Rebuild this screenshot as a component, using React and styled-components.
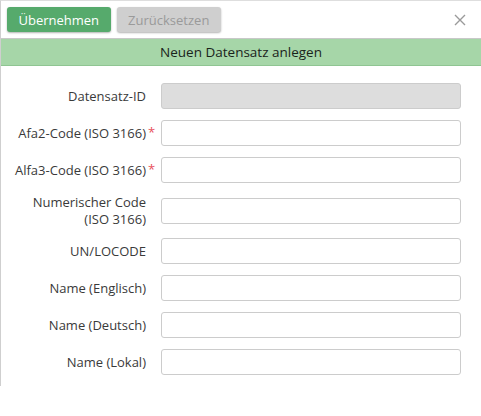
import React from 'react';
import styled, { createGlobalStyle } from 'styled-components';

const GlobalStyle = createGlobalStyle`
	html, body {
		margin: 0;
		padding: 0;
		background: #fff;
		font-family: 'Open Sans', 'Liberation Sans', sans-serif;
	}
`;

const Panel = styled.div`
	box-sizing: border-box;
	width: 481px;
	height: 386px;
	border-top: 1px solid #dedede;
	border-left: 1px solid #cfcfcf;
	background: #fff;
`;

const Toolbar = styled.div`
	display: flex;
	align-items: center;
	gap: 6px;
	height: 37px;
	padding: 0 6px;
	border-bottom: 1px solid #c8c8c8;
`;

const Button = styled.button`
	height: 25px;
	padding: 0 11.5px;
	border: none;
	border-radius: 3px;
	font-family: inherit;
	font-size: 13px;
	color: ${(props) => (props.primary ? '#fff' : '#9a9a9a')};
	background: ${(props) => (props.primary ? '#56aa6c' : '#cfcfcf')};
	box-shadow: 0 1px 2px rgba(0, 0, 0, 0.3);
	cursor: pointer;
`;

const Close = styled.button`
	margin-left: auto;
	margin-right: 8px;
	width: 14px;
	height: 14px;
	padding: 0;
	border: none;
	background: none;
	display: flex;
	align-items: center;
	justify-content: center;
	cursor: pointer;
`;

const Title = styled.div`
	height: 26px;
	line-height: 26px;
	text-align: center;
	background: #a6d6a8;
	border-bottom: 1px solid #8fc592;
	font-size: 13.5px;
	color: #1a241b;
`;

const Form = styled.div`
	display: flex;
	flex-direction: column;
	gap: 11px;
	padding: 17px 20px 0 0;
`;

const Row = styled.div`
	display: flex;
	align-items: center;
`;

const Label = styled.label`
	position: relative;
	flex: 0 0 145px;
	text-align: right;
	font-size: 13px;
	line-height: 16.5px;
	color: #3a3a3a;
`;

const Required = styled.span`
	position: absolute;
	left: calc(100% + 2px);
	top: -1px;
	color: #e8505b;
	font-size: 13px;
`;

const Input = styled.input`
	box-sizing: border-box;
	flex: 1;
	height: 26px;
	margin-left: 15px;
	padding: 0 6px;
	border: 1px solid #cccccc;
	border-radius: 3px;
	background: ${(props) => (props.disabled ? '#dddddd' : '#fff')};
	font-family: inherit;
	font-size: 12px;
	outline: none;
`;

const fields = [
	{ label: 'Datensatz-ID', disabled: true },
	{ label: 'Afa2-Code (ISO 3166)', required: true },
	{ label: 'Alfa3-Code (ISO 3166)', required: true },
	{ label: ['Numerischer Code', '(ISO 3166)'] },
	{ label: 'UN/LOCODE' },
	{ label: 'Name (Englisch)' },
	{ label: 'Name (Deutsch)' },
	{ label: 'Name (Lokal)' },
];

function App() {
	return (
		<>
			<GlobalStyle />
			<Panel>
				<Toolbar>
					<Button primary>Übernehmen</Button>
					<Button>Zurücksetzen</Button>
					<Close aria-label="Schließen">
						<svg width="12" height="12" viewBox="0 0 12 12">
							<path d="M1 1 L11 11 M11 1 L1 11" stroke="#9a9a9a" strokeWidth="1.4" />
						</svg>
					</Close>
				</Toolbar>
				<Title>Neuen Datensatz anlegen</Title>
				<Form>
					{fields.map((f, i) => (
						<Row key={i}>
							<Label>
								{Array.isArray(f.label)
									? f.label.map((l, j) => <div key={j}>{l}</div>)
									: f.label}
								{f.required && <Required>*</Required>}
							</Label>
							<Input disabled={f.disabled} />
						</Row>
					))}
				</Form>
			</Panel>
		</>
	);
}

export default App;
